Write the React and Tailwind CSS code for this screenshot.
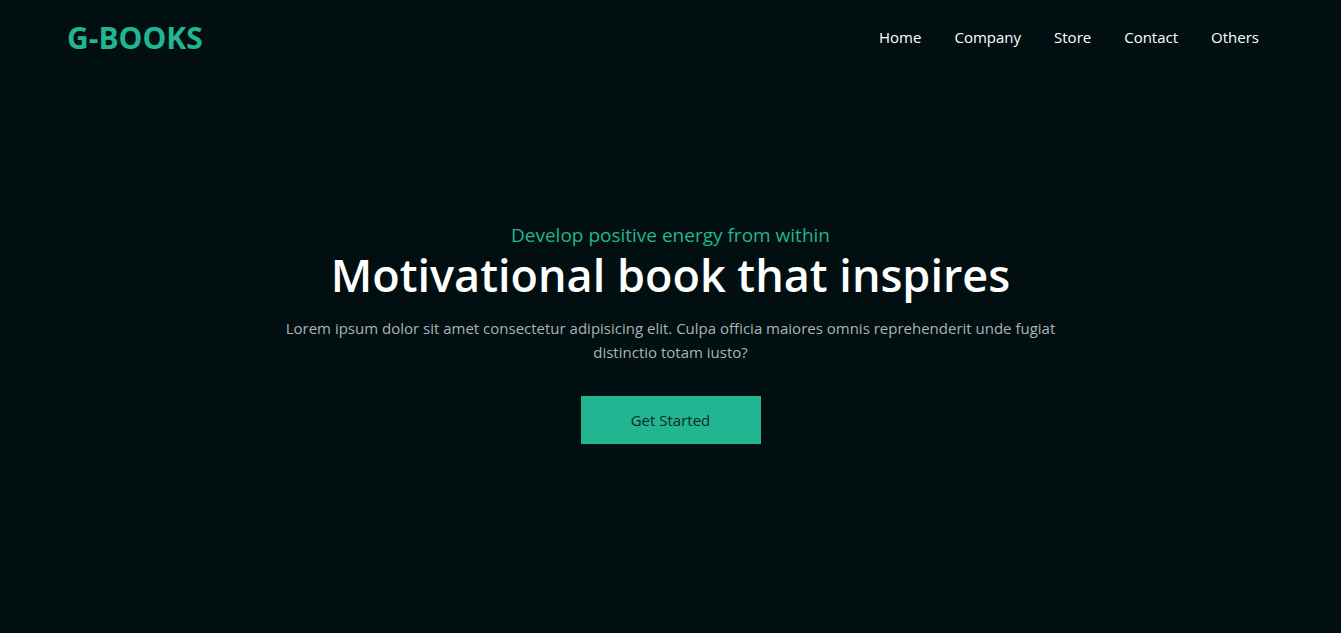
import React from 'react'

const links = ['Home', 'Company', 'Store', 'Contact', 'Others']

export default function App() {
  return (
    <div className="min-h-screen w-full bg-[#010f11] font-['Open_Sans',sans-serif] text-white">
      {/* Header */}
      <header className="flex h-[74px] items-center justify-between pl-[67px] pr-[82px]">
        <h1 className="text-[30px] font-bold text-[#22b592]">G-BOOKS</h1>
        <nav className="flex items-center gap-[33px] text-[15px]">
          {links.map((l) => (
            <a key={l} href="#" className="text-white">
              {l}
            </a>
          ))}
        </nav>
      </header>

      {/* Hero */}
      <section className="flex flex-col items-center pt-[149px] text-center">
        <p className="text-[19px] leading-[24px] text-[#22b592]">Develop positive energy from within</p>
        <h2 className="mt-[2px] text-[45px] font-semibold leading-[52px]">Motivational book that inspires</h2>
        <p className="mt-[15px] max-w-[790px] text-[15px] leading-[24px] text-[#a9b3b5]">
          Lorem ipsum dolor sit amet consectetur adipisicing elit. Culpa officia maiores omnis reprehenderit unde fugiat distinctio totam iusto?
        </p>
        <button className="mt-[32px] h-[48px] w-[180px] bg-[#22b592] text-[15px] text-[#0b2a26]">Get Started</button>
      </section>
    </div>
  )
}
